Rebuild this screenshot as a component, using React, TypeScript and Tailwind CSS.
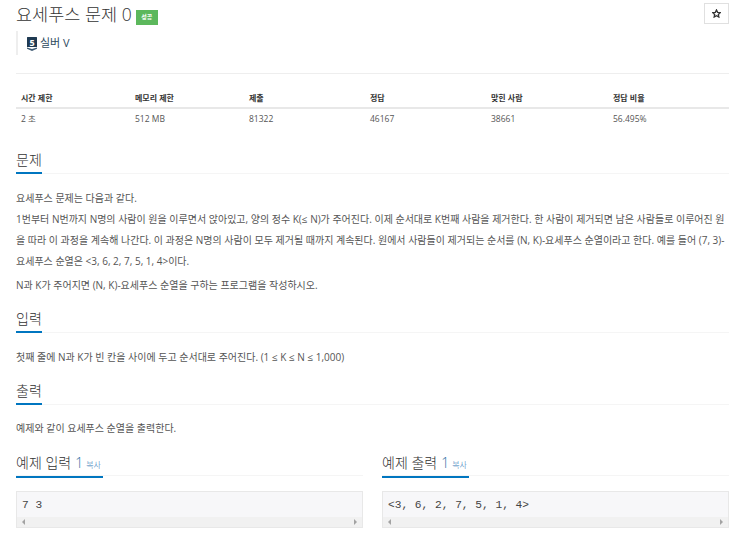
import React from "react";

function Heading({ children }: { children: React.ReactNode }) {
  return (
    <div className="flex items-start border-b border-[#f5f5f5] h-[23px]">
      <div className="h-[23px] border-b-2 border-[#0076c0] text-[14px] leading-[17px] font-light text-[#333]">
        {children}
      </div>
    </div>
  );
}

function SampleBox({ title, value }: { title: string; value: string }) {
  return (
    <div className="w-[347px]">
      <div className="h-[26px] border-b border-[#f5f5f5]">
        <div className="inline-flex items-baseline w-[87px] h-[26px] border-b-2 border-[#0076c0] text-[14px] leading-[22px] font-light text-[#333]">
          {title}
          <span className="ml-[4px] text-[#2e6da4]">1</span>
          <span className="ml-[3px] text-[8px] text-[#337ab7]">복사</span>
        </div>
      </div>
      <div className="mt-[15px] h-[37px] border border-[#e8e8e8] bg-[#f7f7f9] flex flex-col">
        <pre className="h-[25px] px-[5px] pt-[6px] text-[11.2px] leading-[14px] text-[#444] font-['Liberation_Mono',monospace]">{value}</pre>
        <div className="h-[10px] bg-[#f1f1f1] flex items-center justify-between px-[5px]">
          <span className="w-0 h-0 border-y-[3px] border-y-transparent border-r-[3px] border-r-[#a3a3a3]" />
          <span className="w-0 h-0 border-y-[3px] border-y-transparent border-l-[3px] border-l-[#a3a3a3]" />
        </div>
      </div>
    </div>
  );
}

export default function App() {
  const headers = ["시간 제한", "메모리 제한", "제출", "정답", "맞힌 사람", "정답 비율"];
  const values = ["2 초", "512 MB", "81322", "46167", "38661", "56.495%"];
  const widths = ["w-[114px]", "w-[114px]", "w-[121px]", "w-[121px]", "w-[122px]", "w-[121px]"];
  return (
    <div className="w-[750px] h-[539px] overflow-hidden bg-white pl-[16px] pr-[21px] font-['Open_Sans','Noto_Sans_CJK_KR',sans-serif] text-[#333]">
      <div className="h-[31px] flex justify-between">
        <div className="flex items-start">
          <span className="text-[17.5px] leading-[28px] font-light text-[#333]">요세푸스 문제 0</span>
          <span className="ml-[4px] mt-[10px] w-[22px] h-[15px] bg-[#5cb85c] text-white text-[6px] leading-[15px] text-center font-bold">성공</span>
        </div>
        <button className="mt-[3px] w-[25px] h-[21px] border border-[#e0e0e0] flex items-center justify-center text-[#333]">
          <svg width="9" height="9" viewBox="0 0 24 24" fill="none" stroke="currentColor" strokeWidth="3.5">
            <path d="M12 2.5l3 6.4 7 .9-5.1 4.8 1.3 6.9-6.2-3.4-6.2 3.4 1.3-6.9L2 9.8l7-.9z" />
          </svg>
        </button>
      </div>
      <div className="h-[24px] border-l-2 border-[#eee] pl-[9px] flex items-center">
        <svg width="10" height="14" viewBox="0 0 10 14" className="mr-[3px] mt-[1px]">
          <path d="M0.5 0h9a.5.5 0 0 1 .5.5V10H0V.5a.5.5 0 0 1 .5-.5z" fill="#1f3a52" />
          <path d="M0 10.5l5 1.6 5-1.6v1.2L5 14 0 11.7z" fill="#3d5a73" />
          <text x="5" y="8.5" textAnchor="middle" fontSize="9" fontWeight="700" fill="#fff" fontFamily="Open Sans">5</text>
        </svg>
        <span className="text-[11px] leading-[16px] text-[#2d4a5e]">실버 V</span>
      </div>
      <div className="mt-[18px] border-t border-[#eee]" />
      <div className="mt-[15px]">
        <div className="flex h-[20px] border-b-2 border-[#e8e8e8] font-bold items-center pb-[1px] text-[8px]">
          {headers.map((h, i) => (
            <div key={h} className={`${widths[i]} pl-[5px]`}>{h}</div>
          ))}
        </div>
        <div className="flex h-[20px] items-center text-[#555] text-[8.5px]">
          {values.map((v, i) => (
            <div key={v} className={`${widths[i]} pl-[5px]`}>{v}</div>
          ))}
        </div>
      </div>
      <div className="mt-[22px]">
        <Heading>문제</Heading>
      </div>
      <div className="mt-[14px] text-[10px] leading-[21px] text-[#555]">
        <p>요세푸스 문제는 다음과 같다.</p>
        <p>1번부터 N번까지 N명의 사람이 원을 이루면서 앉아있고, 양의 정수 K(≤ N)가 주어진다. 이제 순서대로 K번째 사람을 제거한다. 한 사람이 제거되면 남은 사람들로 이루어진 원을 따라 이 과정을 계속해 나간다. 이 과정은 N명의 사람이 모두 제거될 때까지 계속된다. 원에서 사람들이 제거되는 순서를 (N, K)-요세푸스 순열이라고 한다. 예를 들어 (7, 3)-요세푸스 순열은 &lt;3, 6, 2, 7, 5, 1, 4&gt;이다.</p>
        <p className="mt-[3px]">N과 K가 주어지면 (N, K)-요세푸스 순열을 구하는 프로그램을 작성하시오.</p>
      </div>
      <div className="mt-[14px]"><Heading>입력</Heading></div>
      <p className="mt-[14px] text-[10px] leading-[21px] text-[#555]">첫째 줄에 N과 K가 빈 칸을 사이에 두고 순서대로 주어진다. (1 ≤ K ≤ N ≤ 1,000)</p>
      <div className="mt-[14px]"><Heading>출력</Heading></div>
      <p className="mt-[13px] text-[10px] leading-[21px] text-[#555]">예제와 같이 요세푸스 순열을 출력한다.</p>
      <div className="mt-[11px] flex gap-[19px]">
        <SampleBox title="예제 입력" value="7 3" />
        <SampleBox title="예제 출력" value="<3, 6, 2, 7, 5, 1, 4>" />
      </div>
    </div>
  );
}
